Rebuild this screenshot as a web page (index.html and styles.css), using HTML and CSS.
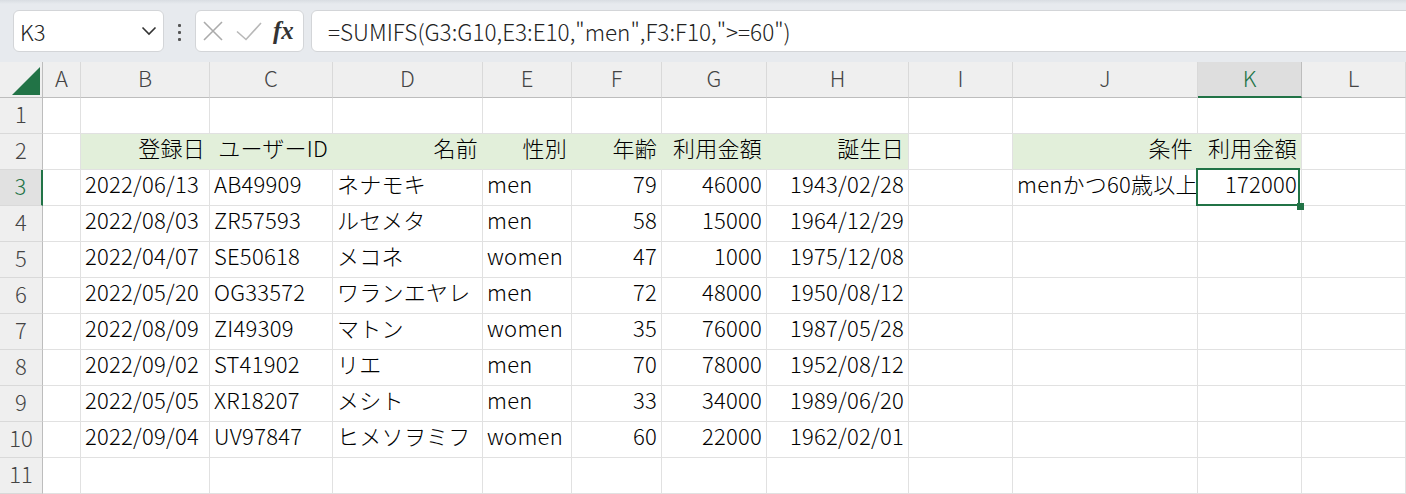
FILE: index.html
```html
<!DOCTYPE html>
<html lang="ja">
<head>
<meta charset="utf-8">
<title>SUMIFS</title>
<link rel="stylesheet" href="styles.css">
</head>
<body>
<div class="toolbar">
  <div class="namebox"><span>K3</span>
    <svg class="chev" width="16" height="10" viewBox="0 0 16 10"><polyline points="1.5,1.5 8,8 14.5,1.5" fill="none" stroke="#333" stroke-width="1.6"/></svg>
  </div>
  <div class="dots"><i></i><i></i><i></i></div>
  <div class="fxbox">
    <svg class="icons" width="70" height="24" viewBox="0 0 70 24">
      <path d="M4 3 L22 21 M22 3 L4 21" stroke="#ababab" stroke-width="1.6" fill="none"/>
      <polyline points="37,12.5 46,20.5 61,4" stroke="#b8b8b8" stroke-width="1.6" fill="none"/>
    </svg>
    <span class="fx">fx</span>
  </div>
  <div class="formula">=SUMIFS(G3:G10,E3:E10,"men",F3:F10,"&gt;=60")</div>
</div>

<div class="sheet">
  <div class="row">
    <div class="corner"><svg width="28" height="28" viewBox="0 0 28 28"><polygon points="28,0 28,28 0,28" fill="#217346"/></svg></div>
    <div class="ch">A</div><div class="ch">B</div><div class="ch">C</div><div class="ch">D</div><div class="ch">E</div><div class="ch">F</div><div class="ch">G</div><div class="ch">H</div><div class="ch">I</div><div class="ch">J</div><div class="ch sel">K</div><div class="ch">L</div>
  </div>
  <div class="row">
    <div class="rh">1</div>
    <div class="c"></div><div class="c"></div><div class="c"></div><div class="c"></div><div class="c"></div><div class="c"></div><div class="c"></div><div class="c"></div><div class="c"></div><div class="c"></div><div class="c"></div><div class="c"></div>
  </div>
  <div class="row">
    <div class="rh">2</div>
    <div class="c"></div>
    <div class="c g r">登録日</div><div class="c g r">ユーザーID</div><div class="c g r">名前</div><div class="c g r">性別</div><div class="c g r">年齢</div><div class="c g r">利用金額</div><div class="c g end r">誕生日</div>
    <div class="c"></div>
    <div class="c g r">条件</div><div class="c g end r">利用金額</div>
    <div class="c"></div>
  </div>
  <div class="row">
    <div class="rh on">3</div>
    <div class="c"></div><div class="c">2022/06/13</div><div class="c">AB49909</div><div class="c">ネナモキ</div><div class="c">men</div><div class="c r">79</div><div class="c r">46000</div><div class="c r">1943/02/28</div><div class="c"></div><div class="c">menかつ60歳以上</div><div class="c r active">172000<span class="selbox"><span class="handle"></span></span></div><div class="c"></div>
  </div>
  <div class="row">
    <div class="rh">4</div>
    <div class="c"></div><div class="c">2022/08/03</div><div class="c">ZR57593</div><div class="c">ルセメタ</div><div class="c">men</div><div class="c r">58</div><div class="c r">15000</div><div class="c r">1964/12/29</div><div class="c"></div><div class="c"></div><div class="c"></div><div class="c"></div>
  </div>
  <div class="row">
    <div class="rh">5</div>
    <div class="c"></div><div class="c">2022/04/07</div><div class="c">SE50618</div><div class="c">メコネ</div><div class="c">women</div><div class="c r">47</div><div class="c r">1000</div><div class="c r">1975/12/08</div><div class="c"></div><div class="c"></div><div class="c"></div><div class="c"></div>
  </div>
  <div class="row">
    <div class="rh">6</div>
    <div class="c"></div><div class="c">2022/05/20</div><div class="c">OG33572</div><div class="c">ワランエヤレ</div><div class="c">men</div><div class="c r">72</div><div class="c r">48000</div><div class="c r">1950/08/12</div><div class="c"></div><div class="c"></div><div class="c"></div><div class="c"></div>
  </div>
  <div class="row">
    <div class="rh">7</div>
    <div class="c"></div><div class="c">2022/08/09</div><div class="c">ZI49309</div><div class="c">マトン</div><div class="c">women</div><div class="c r">35</div><div class="c r">76000</div><div class="c r">1987/05/28</div><div class="c"></div><div class="c"></div><div class="c"></div><div class="c"></div>
  </div>
  <div class="row">
    <div class="rh">8</div>
    <div class="c"></div><div class="c">2022/09/02</div><div class="c">ST41902</div><div class="c">リエ</div><div class="c">men</div><div class="c r">70</div><div class="c r">78000</div><div class="c r">1952/08/12</div><div class="c"></div><div class="c"></div><div class="c"></div><div class="c"></div>
  </div>
  <div class="row">
    <div class="rh">9</div>
    <div class="c"></div><div class="c">2022/05/05</div><div class="c">XR18207</div><div class="c">メシト</div><div class="c">men</div><div class="c r">33</div><div class="c r">34000</div><div class="c r">1989/06/20</div><div class="c"></div><div class="c"></div><div class="c"></div><div class="c"></div>
  </div>
  <div class="row">
    <div class="rh">10</div>
    <div class="c"></div><div class="c">2022/09/04</div><div class="c">UV97847</div><div class="c">ヒメソヲミフ</div><div class="c">women</div><div class="c r">60</div><div class="c r">22000</div><div class="c r">1962/02/01</div><div class="c"></div><div class="c"></div><div class="c"></div><div class="c"></div>
  </div>
  <div class="row">
    <div class="rh">11</div>
    <div class="c"></div><div class="c"></div><div class="c"></div><div class="c"></div><div class="c"></div><div class="c"></div><div class="c"></div><div class="c"></div><div class="c"></div><div class="c"></div><div class="c"></div><div class="c"></div>
  </div>
</div>
</body>
</html>
```
FILE: styles.css
```css
html, body {
  margin: 0;
  padding: 0;
}
body {
  width: 1406px;
  height: 494px;
  overflow: hidden;
  background: #fff;
  font-family: "Noto Sans CJK JP", "Noto Sans", sans-serif;
  font-weight: 300;
}

/* ---------- formula toolbar ---------- */
.toolbar {
  height: 62px;
  box-sizing: border-box;
  padding: 10px 0 0 13px;
  display: flex;
  align-items: flex-start;
  background: linear-gradient(#d9dde2 0, #e7eaee 4px, #e7eaee 100%);
  overflow: hidden;
}
.namebox {
  width: 151px;
  height: 42px;
  box-sizing: border-box;
  border: 1px solid #d3d5d8;
  border-radius: 6px;
  background: #fff;
  display: flex;
  align-items: center;
  padding: 0 6px 0 6px;
  font-size: 22px;
  color: #222;
}
.namebox span {
  flex: 1;
}
.dots {
  width: 31px;
  display: flex;
  flex-direction: column;
  align-items: center;
  gap: 4px;
  padding-top: 14px;
}
.dots i {
  display: block;
  width: 3px;
  height: 3px;
  background: #555;
  border-radius: 1px;
}
.fxbox {
  width: 109px;
  height: 42px;
  box-sizing: border-box;
  border: 1px solid #d3d5d8;
  border-radius: 6px;
  background: #fff;
  display: flex;
  align-items: center;
  padding-left: 4px;
}
.fx {
  margin-left: 3px;
  font-family: "Liberation Serif", serif;
  font-style: italic;
  font-weight: bold;
  font-size: 25px;
  color: #333;
}
.formula {
  flex: 1;
  margin-left: 7px;
  margin-right: -12px;
  height: 42px;
  box-sizing: border-box;
  border: 1px solid #d3d5d8;
  border-radius: 6px;
  background: #fff;
  display: flex;
  align-items: center;
  padding-left: 16px;
  font-size: 22.5px;
  color: #222;
  white-space: nowrap;
}

/* ---------- grid ---------- */
.row {
  display: grid;
  grid-template-columns: 43px 38px 129px 123px 150px 89px 90px 105px 142px 104px 185px 104px 104px;
  height: 36px;
}
.c {
  box-sizing: border-box;
  height: 36px;
  border-right: 1px solid #e1e1e1;
  border-bottom: 1px solid #e1e1e1;
  padding: 0 4px;
  font-size: 22px;
  line-height: 27px;
  letter-spacing: 0.25px;
  color: #000;
  white-space: nowrap;
}
.c.r {
  text-align: right;
}
.c.g {
  background: #e2efda;
  border-right-color: #e2efda;
}
.c.g.end {
  border-right-color: #e1e1e1;
}
.c.active {
  position: relative;
}
.selbox {
  position: absolute;
  left: -2px;
  top: -2px;
  right: 1px;
  bottom: -1px;
  border: 2px solid #217346;
  box-sizing: border-box;
  z-index: 2;
}
.handle {
  position: absolute;
  right: -6px;
  bottom: -6px;
  width: 7px;
  height: 7px;
  background: #217346;
}

.corner,
.ch,
.rh {
  box-sizing: border-box;
  height: 36px;
  background: #efefef;
  color: #444;
  font-size: 22px;
  line-height: 31px;
  text-align: center;
}
.corner {
  border-right: 1px solid #bdbdbd;
  border-bottom: 1px solid #bdbdbd;
  display: flex;
  justify-content: flex-end;
  align-items: flex-end;
  padding: 0 2px 2px 0;
}
.corner svg {
  display: block;
}
.ch {
  border-right: 1px solid #d9d9d9;
  border-bottom: 1px solid #bdbdbd;
}
.ch.sel {
  background: #dedede;
  color: #217346;
  border-bottom: 2px solid #217346;
  border-right-color: #bdbdbd;
}
.rh {
  border-right: 1px solid #bdbdbd;
  border-bottom: 1px solid #d9d9d9;
}
.rh.on {
  background: #e1e1e1;
  color: #217346;
  border-right: 2px solid #217346;
}
```
